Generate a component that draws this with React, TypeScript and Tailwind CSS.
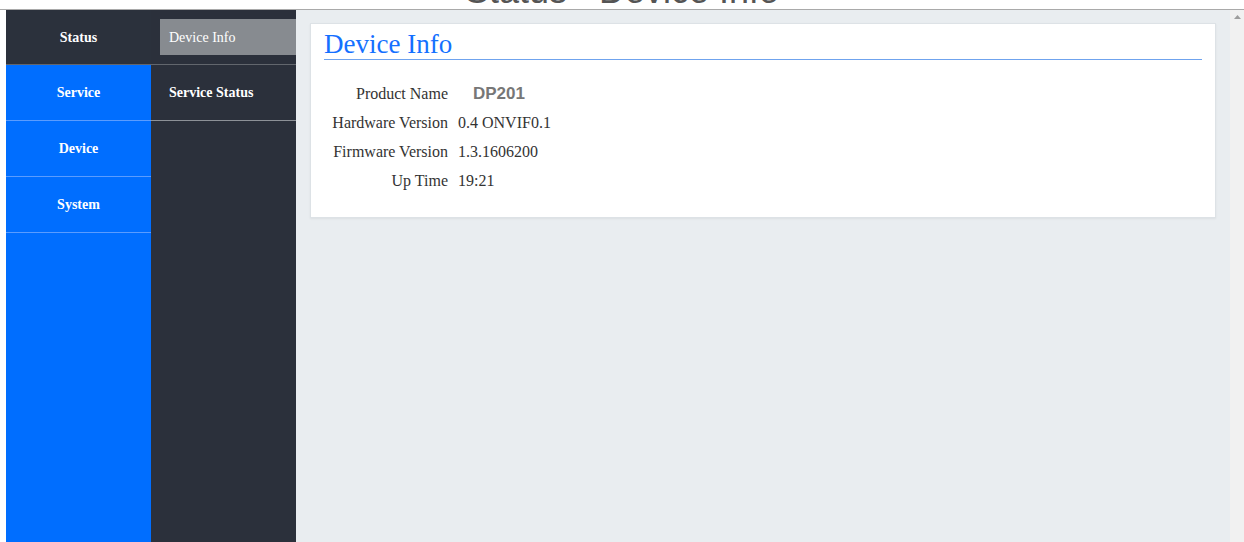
import React from "react";

const serif = { fontFamily: '"Liberation Serif", "Times New Roman", serif' };

const mainMenu = ["Service", "Device", "System"];

const infoRows: { label: string; value: string; strong?: boolean }[] = [
  { label: "Product Name", value: "DP201", strong: true },
  { label: "Hardware Version", value: "0.4 ONVIF0.1" },
  { label: "Firmware Version", value: "1.3.1606200" },
  { label: "Up Time", value: "19:21" },
];

export default function App() {
  return (
    <div className="w-[1244px] h-[542px] bg-white flex flex-col overflow-hidden" style={serif}>
      {/* page header, scrolled mostly out of view */}
      <div className="relative h-[10px] shrink-0 border-b border-[#a9a9a9] overflow-hidden">
        <div
          className="absolute left-0 right-0 top-[-27px] text-center text-[36px] leading-[36px] text-[#555]"
          style={{ fontFamily: '"Liberation Sans", Arial, sans-serif' }}
        >
          Status - Device Info
        </div>
      </div>

      <div className="flex flex-1 min-h-0 pl-[6px]">
        {/* primary menu */}
        <div className="w-[145px] bg-[#006eff] flex flex-col">
          <div className="h-[55px] bg-[#2b313c] border-b border-[#62666d] flex items-center justify-center text-[14px] font-bold text-white">
            Status
          </div>
          {mainMenu.map((m) => (
            <div
              key={m}
              className="h-[56px] border-b border-[#5a9cff] flex items-center justify-center text-[14px] font-bold text-white"
            >
              {m}
            </div>
          ))}
        </div>

        {/* secondary menu */}
        <div className="w-[145px] bg-[#2b303b] flex flex-col">
          <div className="h-[55px] border-b border-[#62666d] pt-[9px] pl-[9px]">
            <div className="h-[36px] bg-[#878b90] flex items-center pl-[9px] text-[14px] text-white">
              Device Info
            </div>
          </div>
          <div className="h-[56px] border-b border-[#8d9197] flex items-center pl-[18px] text-[14px] font-bold text-white">
            Service Status
          </div>
        </div>

        {/* content */}
        <div className="flex-1 bg-[#e9edf0] pt-[13px] px-[14px]">
          <div className="h-[195px] bg-white border border-[#dde2e6] shadow-[0_1px_2px_rgba(0,0,0,0.06)] px-[13px]">
            <div className="pt-[5px] border-b border-[#6fa3ee] text-[27px] leading-[30px] text-[#1470ff]">
              Device Info
            </div>
            <div className="mt-[19px] grid grid-cols-[124px_auto] gap-x-[10px] justify-start">
              {infoRows.map((r) => (
                <React.Fragment key={r.label}>
                  <div className="h-[29px] flex items-center justify-end text-[16px] text-[#333]">{r.label}</div>
                  <div className="h-[29px] flex items-center text-[16px] text-[#333]">
                    {r.strong ? (
                      <span
                        className="pl-[15px] text-[17px] font-bold text-[#777]"
                        style={{ fontFamily: '"Liberation Sans", Arial, sans-serif' }}
                      >
                        {r.value}
                      </span>
                    ) : (
                      r.value
                    )}
                  </div>
                </React.Fragment>
              ))}
            </div>
          </div>
        </div>

        {/* scrollbar */}
        <div className="w-[14px] bg-[#f1f1f1] flex flex-col items-center pt-[5px]">
          <svg width="7" height="4" viewBox="0 0 7 4" className="block">
            <polygon points="3.5,0 7,4 0,4" fill="#9e9e9e" />
          </svg>
        </div>
      </div>
    </div>
  );
}
